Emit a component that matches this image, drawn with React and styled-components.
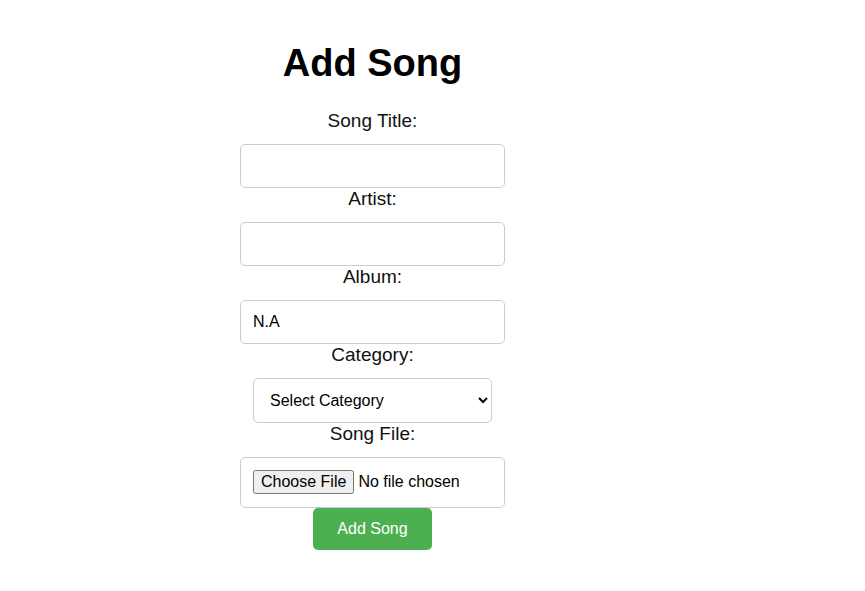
import styled, { createGlobalStyle } from 'styled-components';

const GlobalStyle = createGlobalStyle`
  body {
    margin: 0;
    background: #fff;
    font-family: "Liberation Sans", Arial, sans-serif;
  }
`;

function App() {
  return (
    <>
      <GlobalStyle />
      <Page>
        <Title>Add Song</Title>
        <Form onSubmit={(e) => e.preventDefault()}>
          <Label htmlFor='title'>Song Title:</Label>
          <TextInput id='title' type='text' />
          <Label htmlFor='artist'>Artist:</Label>
          <TextInput id='artist' type='text' />
          <Label htmlFor='album'>Album:</Label>
          <TextInput id='album' type='text' defaultValue='N.A' />
          <Label htmlFor='category'>Category:</Label>
          <Select id='category' defaultValue=''>
            <option value=''>Select Category</option>
            <option value='pop'>Pop</option>
            <option value='rock'>Rock</option>
          </Select>
          <Label htmlFor='file'>Song File:</Label>
          <FileInput id='file' type='file' />
          <SubmitButton type='submit'>Add Song</SubmitButton>
        </Form>
      </Page>
    </>
  );
}

const Page = styled.div`
  width: 745px;
  display: flex;
  flex-direction: column;
  align-items: center;
`;

const Title = styled.h1`
  font-size: 38px;
  font-weight: bold;
  color: #000;
  margin: 42px 0 26px;
  line-height: 42px;
`;

const Form = styled.form`
  display: flex;
  flex-direction: column;
  align-items: center;
`;

const Label = styled.label`
  font-size: 19px;
  line-height: 21px;
  color: #111;
  margin-bottom: 13px;
`;

const TextInput = styled.input`
  box-sizing: border-box;
  width: 265px;
  height: 44px;
  padding: 0 12px;
  font-family: "Liberation Sans", Arial, sans-serif;
  font-size: 16px;
  color: #000;
  border: 1px solid #ccc;
  border-radius: 5px;
  outline: none;
`;

const Select = styled.select`
  box-sizing: border-box;
  width: 239px;
  height: 45px;
  padding: 0 10px 0 12px;
  font-family: "Liberation Sans", Arial, sans-serif;
  font-size: 16px;
  color: #000;
  background: #fff;
  border: 1px solid #ccc;
  border-radius: 5px;
`;

const FileInput = styled.input`
  box-sizing: border-box;
  width: 265px;
  height: 51px;
  padding: 12px;
  font-family: "Liberation Sans", Arial, sans-serif;
  font-size: 16px;
  border: 1px solid #ccc;
  border-radius: 5px;
`;

const SubmitButton = styled.button`
  width: 119px;
  height: 42px;
  background: #4caf50;
  color: #fff;
  border: none;
  border-radius: 5px;
  font-family: "Liberation Sans", Arial, sans-serif;
  font-size: 16px;
  cursor: pointer;
`;

export default App;
